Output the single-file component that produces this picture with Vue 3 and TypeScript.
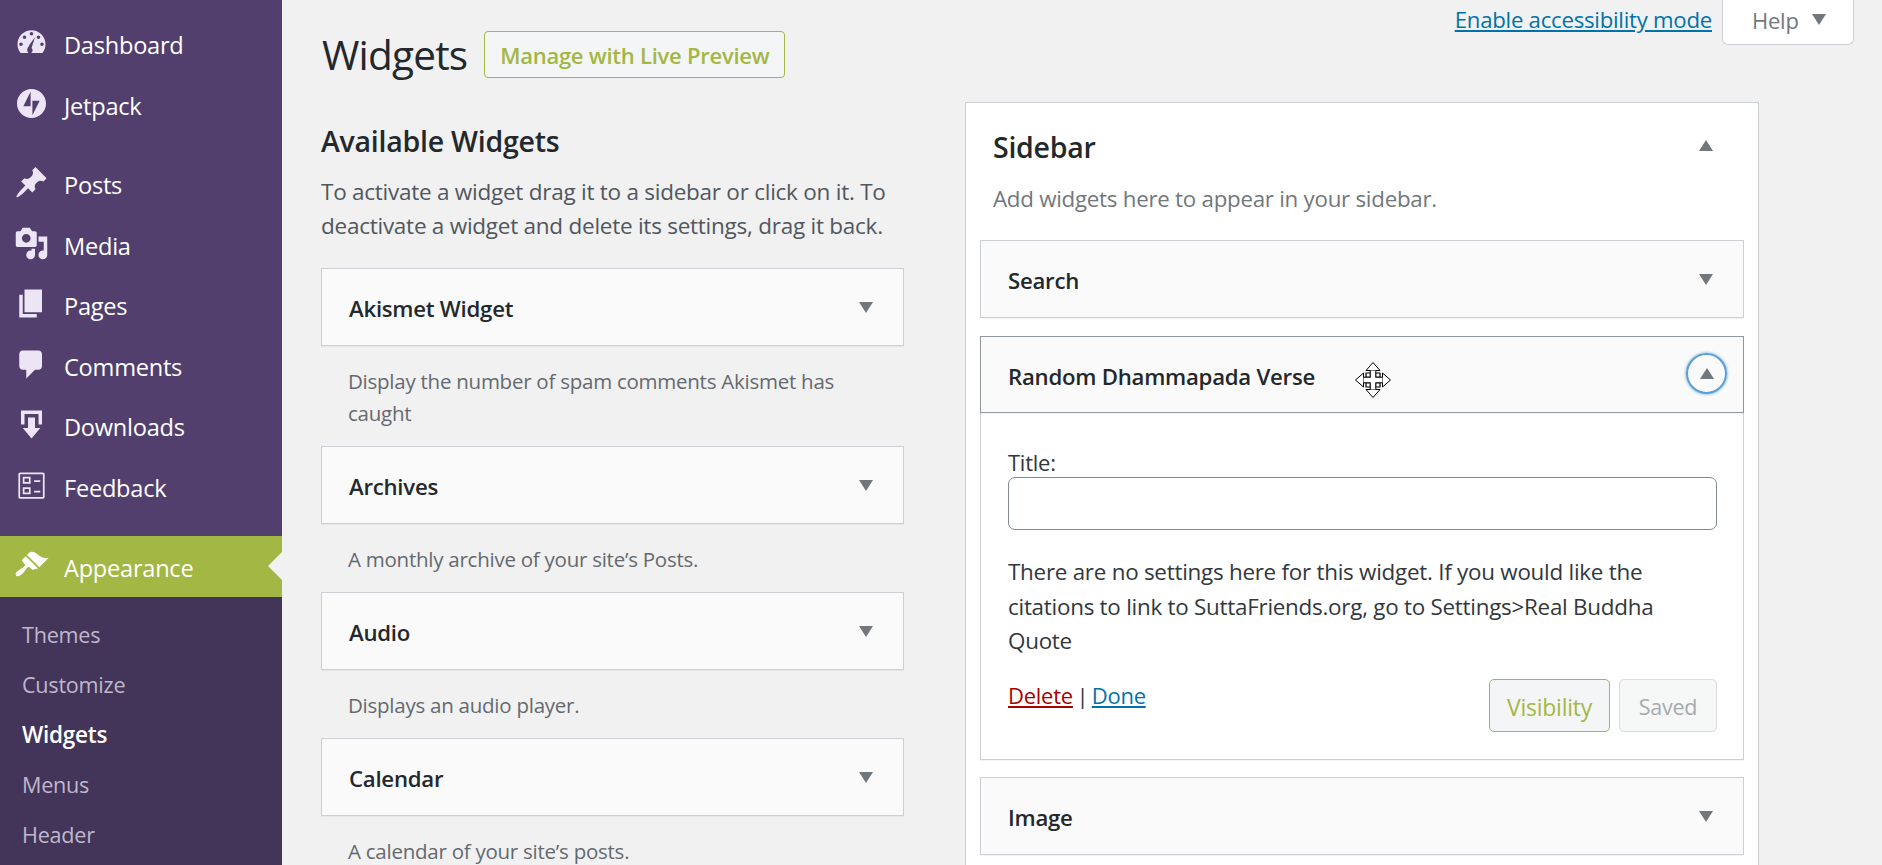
<template>
  <div class="page">
    <aside class="sidebar">
      <ul class="menu">
        <li v-for="item in menuItems" :key="item.label" class="menu-item" :class="{ 'has-gap': item.gap }">
          <svg class="menu-icon" :viewBox="item.viewBox || '0 0 20 20'">
            <path :d="item.icon" fill-rule="evenodd" />
          </svg>
          <span>{{ item.label }}</span>
        </li>
        <li class="menu-item is-current">
          <svg class="menu-icon" viewBox="0 0 20 20">
            <path :d="brushIcon" />
          </svg>
          <span>Appearance</span>
          <i class="current-arrow"></i>
        </li>
      </ul>
      <ul class="submenu">
        <li v-for="sub in subItems" :key="sub" :class="{ active: sub === 'Widgets' }">{{ sub }}</li>
      </ul>
    </aside>

    <main class="content">
      <div class="screen-meta">
        <a class="a11y-link" href="#">Enable accessibility mode</a>
        <div class="help-tab">
          <span>Help</span>
          <i class="arrow down"></i>
        </div>
      </div>

      <div class="title-row">
        <h1>Widgets</h1>
        <a class="live-btn" href="#">Manage with Live Preview</a>
      </div>

      <div class="columns">
        <section class="available">
          <h2>Available Widgets</h2>
          <p class="intro">To activate a widget drag it to a sidebar or click on it. To deactivate a widget and delete its settings, drag it back.</p>
          <div v-for="w in availableWidgets" :key="w.name">
            <div class="widget-top">
              <strong>{{ w.name }}</strong>
              <i class="arrow down"></i>
            </div>
            <p class="widget-desc">{{ w.desc }}</p>
          </div>
        </section>

        <section class="sidebar-panel">
          <div class="panel-head">
            <div class="panel-title">
              <h2>Sidebar</h2>
              <i class="arrow up"></i>
            </div>
            <p>Add widgets here to appear in your sidebar.</p>
          </div>

          <div class="widget-list">
            <div class="widget-top">
              <strong>Search</strong>
              <i class="arrow down"></i>
            </div>

            <div class="widget-open">
              <div class="widget-top is-open">
                <strong>Random Dhammapada Verse</strong>
                <span class="toggle"><i class="arrow up"></i></span>
                <svg class="move-cursor" viewBox="-18 -18 36 36">
                  <g fill="#fff" stroke="#000" stroke-width="1" stroke-linejoin="round">
                    <path d="M0-17.5 7-9.5H-7zM0 17.5 7 9.5H-7zM-17.5 0-9.5 7V-7zM17.5 0 9.5 7V-7z" />
                    <path d="M-2.8-9.5H2.8V-2.8H9.5V2.8H2.8V9.5H-2.8V2.8H-9.5V-2.8H-2.8z" stroke="none" />
                    <path d="M-7-7H-2.8V-2.8H-7zM2.8-7H7V-2.8H2.8zM-7 2.8H-2.8V7H-7zM2.8 2.8H7V7H2.8z" stroke-width="1.2" />
                    <path d="M-2.8-9.5V-7M2.8-9.5V-7M-2.8 9.5V7M2.8 9.5V7M-9.5-2.8H-7M-9.5 2.8H-7M9.5-2.8H7M9.5 2.8H7" />
                  </g>
                </svg>
              </div>
              <div class="widget-body">
                <label for="verse-title">Title:</label>
                <input id="verse-title" type="text" />
                <p>There are no settings here for this widget. If you would like the citations to link to SuttaFriends.org, go to Settings&gt;Real Buddha Quote</p>
                <div class="widget-actions">
                  <div class="action-links">
                    <a class="delete" href="#">Delete</a> | <a href="#">Done</a>
                  </div>
                  <div class="action-buttons">
                    <button class="btn-visibility" type="button">Visibility</button>
                    <button class="btn-saved" type="button">Saved</button>
                  </div>
                </div>
              </div>
            </div>

            <div class="widget-top">
              <strong>Image</strong>
              <i class="arrow down"></i>
            </div>
          </div>
        </section>
      </div>
    </main>
  </div>
</template>

<script setup lang="ts">
interface MenuItem {
  label: string
  icon: string
  viewBox?: string
  gap?: boolean
}

const menuItems: MenuItem[] = [
  {
    label: 'Dashboard',
    icon: 'M3.76 16h12.48c1.1-1.37 1.76-3.11 1.76-5 0-4.42-3.58-8-8-8s-8 3.58-8 8c0 1.89.66 3.63 1.76 5zM10 4c.55 0 1 .45 1 1s-.45 1-1 1-1-.45-1-1 .45-1 1-1zM6 6c.55 0 1 .45 1 1s-.45 1-1 1-1-.45-1-1 .45-1 1-1zm8 0c.55 0 1 .45 1 1s-.45 1-1 1-1-.45-1-1 .45-1 1-1zm-5.37 5.55L12 7l-2 6.2c.36.36.63.86.63 1.3 0 .9-.73 1.5-1.63 1.5s-1.4-.6-1.4-1.5c0-1.1.2-1.6 1.03-2.45zM4 10c.55 0 1 .45 1 1s-.45 1-1 1-1-.45-1-1 .45-1 1-1zm12 0c.55 0 1 .45 1 1s-.45 1-1 1-1-.45-1-1 .45-1 1-1z'
  },
  {
    label: 'Jetpack',
    viewBox: '-3.3 -3.3 38.6 38.6',
    icon: 'M16 0C7.2 0 0 7.2 0 16s7.2 16 16 16 16-7.2 16-16S24.8 0 16 0zM15 19H7l8-16v16zM17 29V13h8l-8 16z'
  },
  {
    label: 'Posts',
    gap: true,
    icon: 'M10.44 3.02l1.82-1.82 6.36 6.35-1.83 1.82c-1.05-.68-2.48-.57-3.41.36l-.75.75c-.92.93-1.04 2.35-.35 3.41l-1.83 1.82-2.41-2.41-2.8 2.79c-.42.42-3.38 2.71-3.8 2.29s1.86-3.39 2.28-3.81l2.79-2.79L4.1 9.36l1.83-1.82c1.05.69 2.48.57 3.4-.36l.75-.75c.93-.92 1.05-2.35.36-3.41z'
  },
  {
    label: 'Media',
    icon: 'M13 11V4c0-.55-.45-1-1-1h-1.67L9 1H5L3.67 3H2c-.55 0-1 .45-1 1v7c0 .55.45 1 1 1h10c.55 0 1-.45 1-1zM7 4.5c1.38 0 2.5 1.12 2.5 2.5S8.38 9.5 7 9.5 4.5 8.38 4.5 7 5.62 4.5 7 4.5zM14 6h5v10.5c0 1.38-1.12 2.5-2.5 2.5S14 17.88 14 16.5s1.12-2.5 2.5-2.5c.17 0 .34.02.5.05V9h-3V6zm-4 8.05V13h2v3.5c0 1.38-1.12 2.5-2.5 2.5S7 17.88 7 16.5 8.12 14 9.5 14c.17 0 .34.02.5.05z'
  },
  { label: 'Pages', icon: 'M6 15V2h10v13H6zm-1 1h8v2H3V5h2v11z' },
  {
    label: 'Comments',
    icon: 'M5 2h9c1.1 0 2 .9 2 2v7c0 1.1-.9 2-2 2h-2l-5 5v-5H5c-1.1 0-2-.9-2-2V4c0-1.1.9-2 2-2z'
  },
  { label: 'Downloads', icon: 'M14.01 4v6h2V2H4v8h2.01V4h8zm-2 2v6h3l-5 6-5-6h3V6h4z' },
  {
    label: 'Feedback',
    icon: 'M3.5 2.5h13c.55 0 1 .45 1 1v13c0 .55-.45 1-1 1h-13c-.55 0-1-.45-1-1v-13c0-.55.45-1 1-1zm13 14v-13h-13v13h13zM5 5h4.5v4H5V5zm1 1v2h2.5V6H6zm5.5 1H15v1h-3.5V7zM5 11h4.5v4H5v-4zm1 1v2h2.5v-2H6zm5.5 1H15v1h-3.5v-1z'
  }
]

const brushIcon =
  'M14.48 11.06L7.41 3.99l1.5-1.5c.5-.56 2.3-.47 3.51.32 1.21.8 1.43 1.28 2.91 2.1 1.18.64 2.45 1.26 4.45.85zm-.71.71L6.7 4.7 4.93 6.47c-.39.39-.39 1.02 0 1.41l1.06 1.06c.39.39.39 1.03 0 1.42-.6.6-1.43 1.11-2.21 1.69-.35.26-.7.53-1.01.84C1.43 13.23.4 14.89 1.3 15.79c.9.9 2.55-.13 3.9-1.48.31-.31.58-.66.84-1.01.58-.78 1.09-1.61 1.69-2.21.39-.39 1.02-.39 1.41 0l1.06 1.06c.39.39 1.02.39 1.41 0z'

const subItems = ['Themes', 'Customize', 'Widgets', 'Menus', 'Header']

const availableWidgets = [
  { name: 'Akismet Widget', desc: 'Display the number of spam comments Akismet has caught' },
  { name: 'Archives', desc: 'A monthly archive of your site’s Posts.' },
  { name: 'Audio', desc: 'Displays an audio player.' },
  { name: 'Calendar', desc: 'A calendar of your site’s posts.' }
]
</script>

<style>
html,
body {
  margin: 0;
  background: #f1f1f1;
  overflow: hidden;
}
</style>

<style scoped>
.page {
  display: flex;
  height: 865px;
  overflow: hidden;
  background: #f1f1f1;
  color: #23282d;
  font-family: "Open Sans", "Noto Sans", sans-serif;
  font-size: 22px;
  letter-spacing: -0.25px;
}

.sidebar {
  width: 282px;
  flex-shrink: 0;
  background: #523f6d;
}

.menu,
.submenu {
  list-style: none;
  margin: 0;
  padding: 0;
}

.menu {
  padding-top: 15px;
}

.menu-item {
  position: relative;
  display: flex;
  align-items: center;
  height: 60.5px;
  padding-left: 14px;
  color: #fff;
  font-size: 23.6px;
}

.menu-item.has-gap {
  margin-top: 19px;
}

.menu-icon {
  width: 35px;
  height: 35px;
  margin-right: 15px;
  margin-top: -5px;
  fill: #ece5f5;
}

.is-current {
  margin-top: 18px;
  padding-top: 3px;
  box-sizing: border-box;
  background: #a3b745;
}

.is-current .menu-icon {
  fill: #fff;
}

.current-arrow {
  position: absolute;
  right: 0;
  top: 16px;
  border: 14px solid transparent;
  border-left-width: 0;
  border-right-color: #f1f1f1;
}

.submenu {
  height: 269px;
  padding-top: 13px;
  box-sizing: border-box;
  background: #43345a;
}

.submenu li {
  height: 50px;
  line-height: 50px;
  padding-left: 22px;
  color: #bfb8cb;
  font-size: 21.6px;
}

.submenu li.active {
  color: #fff;
  font-size: 22.5px;
  font-weight: 600;
}

.content {
  flex: 1;
  min-width: 0;
}

.screen-meta {
  display: flex;
  justify-content: flex-end;
  align-items: flex-start;
  gap: 10px;
  height: 31px;
  padding-right: 28px;
}

.a11y-link {
  margin-top: 4px;
  color: #0073aa;
  font-size: 22.2px;
  line-height: 32px;
}

.help-tab {
  display: flex;
  align-items: center;
  gap: 13px;
  box-sizing: border-box;
  width: 132px;
  height: 45px;
  padding: 0 0 5px 29px;
  border: 1px solid #ccd0d4;
  border-top: 0;
  border-radius: 0 0 6px 6px;
  background: #fff;
  color: #72777c;
  font-size: 22px;
  flex-shrink: 0;
}

.title-row {
  display: flex;
  align-items: center;
  gap: 17px;
  height: 47px;
  padding-left: 40px;
}

h1 {
  margin: 0;
  font-size: 40.5px;
  font-weight: 400;
  letter-spacing: -0.8px;
}

.live-btn {
  display: flex;
  align-items: center;
  justify-content: center;
  box-sizing: border-box;
  width: 301px;
  height: 47px;
  border: 1px solid #a3b745;
  border-radius: 4px;
  background: #f3f5f6;
  color: #a3b745;
  font-size: 22px;
  font-weight: 600;
  white-space: nowrap;
  text-decoration: none;
}

.columns {
  display: flex;
  align-items: flex-start;
  gap: 61px;
  margin-top: 24px;
  padding-left: 39px;
}

.available {
  width: 583px;
  flex-shrink: 0;
  padding-top: 22px;
}

h2 {
  margin: 0;
  font-size: 28.5px;
  font-weight: 600;
  line-height: 34px;
}

.intro {
  margin: 17px 0 25px;
  color: #50575e;
  font-size: 22.5px;
  line-height: 34px;
}

.widget-top {
  position: relative;
  display: flex;
  align-items: center;
  justify-content: space-between;
  box-sizing: border-box;
  height: 78px;
  padding: 3px 30px 0 27px;
  border: 1px solid #ccd0d4;
  background: #fafafa;
  box-shadow: 0 1px 1px rgba(0, 0, 0, 0.04);
  font-size: 22.2px;
}

.widget-top strong {
  font-weight: 600;
}

.widget-top .arrow {
  margin-top: -2px;
}

.widget-desc {
  margin: 19px 0 17px;
  padding: 0 30px 0 27px;
  color: #646970;
  line-height: 32px;
  font-size: 20.5px;
}

.arrow {
  display: block;
  width: 0;
  height: 0;
  border-left: 7px solid transparent;
  border-right: 7px solid transparent;
}

.arrow.down {
  border-top: 11px solid #72777c;
}

.arrow.up {
  border-bottom: 11px solid #72777c;
}

.sidebar-panel {
  box-sizing: border-box;
  width: 794px;
  flex-shrink: 0;
  height: 800px;
  padding: 0 14px;
  border: 1px solid #ccd0d4;
  background: #fff;
}

.panel-head {
  height: 137px;
  padding: 27px 31px 0 13px;
  box-sizing: border-box;
}

.panel-title {
  display: flex;
  align-items: center;
  justify-content: space-between;
}

.panel-title .arrow {
  margin-top: -3px;
}

.panel-head p {
  margin: 19px 0 0;
  color: #72777c;
  font-size: 22.3px;
}

.widget-list {
  display: flex;
  flex-direction: column;
  gap: 18px;
}

.widget-open {
  box-sizing: border-box;
  height: 424px;
  margin-bottom: -1px;
  border: 1px solid #ccd0d4;
  border-top: 0;
  box-shadow: 0 1px 1px rgba(0, 0, 0, 0.04);
}

.widget-top.is-open {
  height: 77px;
  margin: 0 -1px;
  border-color: #8f98a1;
}

.toggle {
  position: absolute;
  right: 16px;
  top: 16px;
  display: flex;
  align-items: center;
  justify-content: center;
  box-sizing: border-box;
  width: 41px;
  height: 41px;
  border: 2px solid #5b9dd9;
  border-radius: 50%;
  box-shadow: 0 0 3px rgba(30, 140, 190, 0.8);
}

.toggle .arrow {
  margin-top: 0;
}

.move-cursor {
  position: absolute;
  left: 374px;
  top: 25px;
  width: 36px;
  height: 36px;
}

.widget-body {
  padding: 34px 26px 0 27px;
  color: #32373c;
}

.widget-body label {
  display: block;
  line-height: 30px;
  font-size: 22px;
}

.widget-body input {
  display: block;
  box-sizing: border-box;
  width: 100%;
  height: 53px;
  border: 1px solid #7e8993;
  border-radius: 7px;
  background: #fff;
}

.widget-body p {
  margin: 25px 0 0;
  padding-right: 8px;
  font-size: 22.4px;
  line-height: 34.5px;
}

.widget-actions {
  display: flex;
  justify-content: space-between;
  margin-top: 20px;
}

.action-links {
  margin-top: -1px;
  line-height: 34.5px;
  word-spacing: -2px;
}

.action-links a {
  color: #0073aa;
}

.action-links a.delete {
  color: #a00;
}

.action-buttons {
  display: flex;
  gap: 9px;
}

.action-buttons button {
  box-sizing: border-box;
  height: 53px;
  margin: 0;
  padding: 3px 0 0;
  border-radius: 5px;
  font-family: inherit;
  letter-spacing: inherit;
}

.btn-visibility {
  width: 121px;
  border: 1px solid #a3b745;
  background: #f3f5f6;
  color: #a3b745;
  font-size: 23px;
}

.btn-saved {
  width: 98px;
  border: 1px solid #dcdcde;
  background: #f6f7f7;
  color: #a7aaad;
  font-size: 21.5px;
}
</style>
